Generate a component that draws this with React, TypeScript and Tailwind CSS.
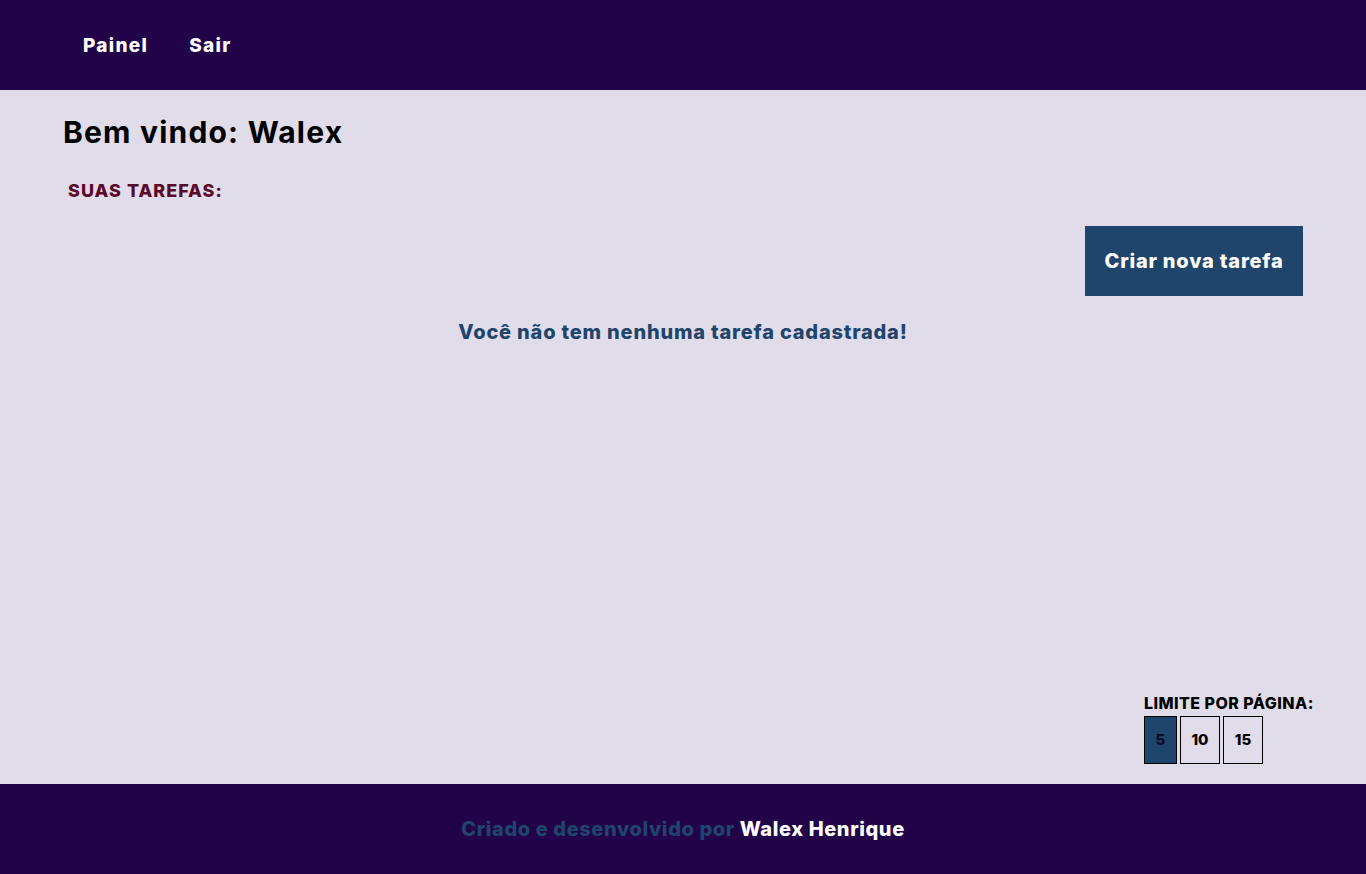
function App() {
    return (
        <div className="min-h-screen flex flex-col bg-[#e1dce9] text-black" style={{ fontFamily: "Inter, 'Open Sans', sans-serif" }}>
            <header className="h-[90px] bg-[#22034a] flex items-center px-[83px] pt-[2px] gap-[41px]">
                <a href="#" className="text-white font-extrabold text-[19px] tracking-[1.3px]">Painel</a>
                <a href="#" className="text-white font-extrabold text-[19px] tracking-[1.3px]">Sair</a>
            </header>

            <main className="flex-1 flex flex-col px-[63px]">
                <h1 className="font-bold text-[30px] mt-[22px] leading-[40px] tracking-[1.2px]">Bem vindo: Walex</h1>
                <h2 className="font-extrabold text-[18px] text-[#5c0829] ml-[5px] mt-[27px] leading-[24px] tracking-[1px]">SUAS TAREFAS:</h2>
                <div className="flex justify-end mt-[23px]">
                    <button className="w-[218px] h-[70px] bg-[#1f456d] text-white font-extrabold text-[20px] tracking-[0.8px]">
                        Criar nova tarefa
                    </button>
                </div>
                <p className="text-center font-extrabold text-[20px] text-[#1f456d] mt-[21px] tracking-[0.8px]">
                    Você não tem nenhuma tarefa cadastrada!
                </p>
                <div className="flex-1" />
                <div className="self-end mr-[-10px] mb-[20px] w-[169px]">
                    <p className="font-extrabold text-[16px] leading-[20px] tracking-[0.45px] whitespace-nowrap">LIMITE POR PÁGINA:</p>
                    <div className="flex gap-[3px] mt-[3px]">
                        <button className="w-[33px] h-[48px] bg-[#1f456d] border border-black font-extrabold text-[15px] text-[#0a0a2a]">5</button>
                        <button className="w-[40px] h-[48px] border border-black font-extrabold text-[15px]">10</button>
                        <button className="w-[40px] h-[48px] border border-black font-extrabold text-[15px]">15</button>
                    </div>
                </div>
            </main>

            <footer className="h-[90px] bg-[#22034a] flex items-center justify-center">
                <p className="font-extrabold text-[20px] tracking-[0.6px] text-[#1f456d]">
                    Criado e desenvolvido por <span className="text-white">Walex Henrique</span>
                </p>
            </footer>
        </div>
    );
}

export default App;
